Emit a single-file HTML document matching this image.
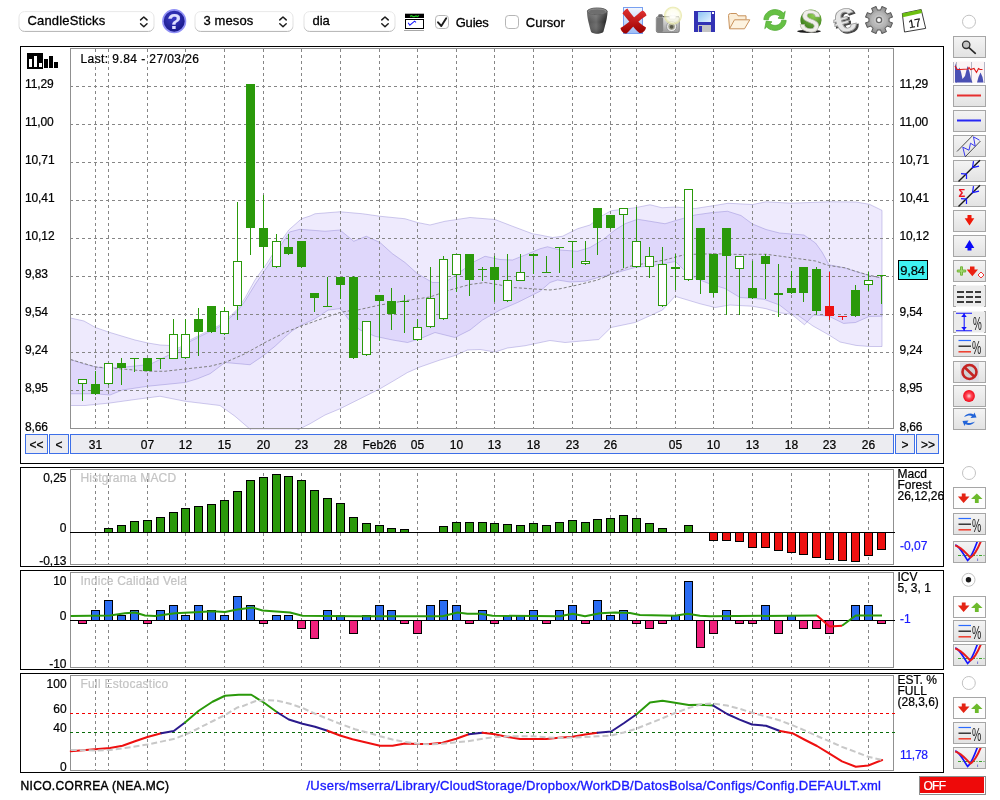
<!DOCTYPE html>
<html><head><meta charset="utf-8"><title>Chart</title>
<style>
html,body{margin:0;padding:0;background:#fff}
body{width:1000px;height:800px;position:relative;overflow:hidden;font-family:"Liberation Sans",sans-serif;font-size:13px;color:#000}
</style></head><body>

<svg width="1000" height="800" viewBox="0 0 1000 800" style="position:absolute;left:0;top:0;will-change:transform" font-family="Liberation Sans, sans-serif" font-size="12" fill="#000">
<defs><clipPath id="cpm"><rect x="70" y="48" width="824" height="382"/></clipPath></defs>
<rect x="20.5" y="46.5" width="923" height="417.0" fill="#fff" stroke="#000" shape-rendering="crispEdges"/>
<rect x="20.5" y="467.5" width="923" height="99.0" fill="#fff" stroke="#000" shape-rendering="crispEdges"/>
<rect x="20.5" y="570.5" width="923" height="99.0" fill="#fff" stroke="#000" shape-rendering="crispEdges"/>
<rect x="20.5" y="673.5" width="923" height="99.0" fill="#fff" stroke="#000" shape-rendering="crispEdges"/>
<g clip-path="url(#cpm)">
<polygon points="70.50,318.00 84.00,321.00 95.50,327.50 110.00,332.50 135.00,340.00 148.00,343.00 160.00,345.00 170.00,345.50 179.00,348.00 191.00,339.50 206.00,332.00 219.00,325.50 231.00,315.50 237.50,309.00 245.00,298.00 255.00,280.00 267.50,262.50 280.00,242.50 288.75,230.00 301.50,218.75 310.00,216.00 315.00,213.75 340.00,211.75 362.50,213.75 380.00,216.25 405.00,218.75 417.50,222.50 430.00,225.00 445.00,221.25 470.00,217.50 495.00,219.50 512.50,226.25 532.50,233.75 540.00,235.00 552.50,237.50 562.50,236.25 577.50,228.75 590.00,225.00 600.00,217.00 611.00,210.75 635.00,207.75 650.00,204.75 662.00,207.75 675.50,207.00 695.00,208.50 714.50,205.50 728.00,203.25 752.50,204.50 766.00,201.80 790.75,203.20 829.00,201.80 856.00,202.00 869.50,204.30 882.00,210.40 882.00,346.50 869.50,346.50 856.00,345.40 840.00,342.00 829.00,335.00 813.00,326.00 797.50,315.00 779.50,312.75 766.00,308.70 752.50,306.25 730.00,305.00 715.00,307.50 700.00,303.75 675.00,296.25 662.50,310.00 635.00,322.50 611.00,327.50 598.75,339.50 565.00,342.50 550.00,340.50 525.00,345.75 507.50,348.00 495.00,352.00 480.00,349.50 467.50,350.00 455.00,355.50 440.00,360.00 420.00,367.00 407.50,372.50 395.00,380.00 380.00,388.75 360.00,398.75 340.00,408.75 325.00,415.00 310.00,423.75 300.00,428.75 292.00,433.00 254.00,433.00 251.00,430.00 235.00,416.25 220.00,405.50 185.00,401.25 160.00,396.25 135.00,399.50 110.00,403.00 85.00,405.50 70.50,405.50" fill="rgba(115,85,240,0.12)" stroke="rgba(120,110,200,0.35)" stroke-width="1"/>
<polygon points="70.50,359.50 84.00,364.00 96.00,367.00 103.00,368.00 120.00,367.50 135.00,366.00 150.00,364.40 169.00,355.00 179.00,350.00 191.00,341.00 206.00,333.50 219.00,327.00 231.00,317.00 237.50,311.00 245.00,301.00 256.00,283.00 268.50,265.00 281.00,245.00 289.50,232.00 300.00,229.25 325.00,231.25 340.00,230.00 353.75,241.25 366.25,236.25 380.00,242.50 392.50,253.75 405.00,262.50 417.50,273.75 432.50,282.50 445.00,282.50 457.50,273.75 475.00,261.25 485.00,256.25 500.00,259.50 512.50,260.00 525.00,255.00 540.00,248.75 547.50,246.75 560.00,250.00 577.50,251.25 590.00,247.50 602.50,240.00 615.00,230.00 625.00,223.75 637.50,219.25 650.00,221.25 665.00,223.75 677.50,220.00 695.00,215.00 712.50,212.50 727.50,211.25 741.00,215.50 752.50,224.00 766.00,229.50 779.50,233.00 804.00,235.00 815.50,243.00 822.00,252.00 829.00,264.80 845.00,267.90 856.00,271.60 869.00,275.40 882.00,278.20 882.00,316.20 869.00,316.50 855.50,322.50 843.50,323.40 828.50,316.00 813.50,315.00 804.50,324.75 795.00,317.00 779.50,305.00 763.75,299.25 748.00,298.00 740.00,297.50 725.00,288.50 710.00,284.00 695.00,278.00 683.00,269.00 675.50,261.50 650.00,266.00 635.00,267.50 611.00,274.25 602.50,276.25 585.00,281.25 570.00,282.00 557.50,280.00 550.00,282.50 540.00,291.25 532.50,295.00 517.50,302.50 500.00,310.00 482.50,320.00 470.00,330.00 455.00,337.50 435.00,332.50 420.00,338.75 407.50,342.50 392.50,340.00 375.00,336.25 360.00,330.00 354.00,325.00 348.60,319.40 343.20,312.20 340.20,308.60 328.20,310.10 315.00,318.80 300.00,325.80 292.00,331.00 285.00,337.00 275.00,346.25 262.50,356.25 250.00,364.75 225.00,362.50 210.00,373.75 197.50,378.75 185.00,382.50 147.50,386.25 122.50,390.00 110.00,395.00 95.50,393.75 70.50,393.75" fill="rgba(115,85,240,0.12)" stroke="rgba(120,110,200,0.35)" stroke-width="1"/>
</g>
<line x1="95.5" y1="49" x2="95.5" y2="428" stroke="#868686" stroke-dasharray="3 3" shape-rendering="crispEdges"/>
<line x1="108.5" y1="49" x2="108.5" y2="428" stroke="#868686" stroke-dasharray="3 3" shape-rendering="crispEdges"/>
<line x1="147.5" y1="49" x2="147.5" y2="428" stroke="#868686" stroke-dasharray="3 3" shape-rendering="crispEdges"/>
<line x1="185.5" y1="49" x2="185.5" y2="428" stroke="#868686" stroke-dasharray="3 3" shape-rendering="crispEdges"/>
<line x1="224.5" y1="49" x2="224.5" y2="428" stroke="#868686" stroke-dasharray="3 3" shape-rendering="crispEdges"/>
<line x1="263.5" y1="49" x2="263.5" y2="428" stroke="#868686" stroke-dasharray="3 3" shape-rendering="crispEdges"/>
<line x1="301.5" y1="49" x2="301.5" y2="428" stroke="#868686" stroke-dasharray="3 3" shape-rendering="crispEdges"/>
<line x1="340.5" y1="49" x2="340.5" y2="428" stroke="#868686" stroke-dasharray="3 3" shape-rendering="crispEdges"/>
<line x1="379.5" y1="49" x2="379.5" y2="428" stroke="#868686" stroke-dasharray="3 3" shape-rendering="crispEdges"/>
<line x1="417.5" y1="49" x2="417.5" y2="428" stroke="#868686" stroke-dasharray="3 3" shape-rendering="crispEdges"/>
<line x1="456.5" y1="49" x2="456.5" y2="428" stroke="#868686" stroke-dasharray="3 3" shape-rendering="crispEdges"/>
<line x1="494.5" y1="49" x2="494.5" y2="428" stroke="#868686" stroke-dasharray="3 3" shape-rendering="crispEdges"/>
<line x1="533.5" y1="49" x2="533.5" y2="428" stroke="#868686" stroke-dasharray="3 3" shape-rendering="crispEdges"/>
<line x1="572.5" y1="49" x2="572.5" y2="428" stroke="#868686" stroke-dasharray="3 3" shape-rendering="crispEdges"/>
<line x1="610.5" y1="49" x2="610.5" y2="428" stroke="#868686" stroke-dasharray="3 3" shape-rendering="crispEdges"/>
<line x1="636.5" y1="49" x2="636.5" y2="428" stroke="#868686" stroke-dasharray="3 3" shape-rendering="crispEdges"/>
<line x1="675.5" y1="49" x2="675.5" y2="428" stroke="#868686" stroke-dasharray="3 3" shape-rendering="crispEdges"/>
<line x1="713.5" y1="49" x2="713.5" y2="428" stroke="#868686" stroke-dasharray="3 3" shape-rendering="crispEdges"/>
<line x1="752.5" y1="49" x2="752.5" y2="428" stroke="#868686" stroke-dasharray="3 3" shape-rendering="crispEdges"/>
<line x1="791.5" y1="49" x2="791.5" y2="428" stroke="#868686" stroke-dasharray="3 3" shape-rendering="crispEdges"/>
<line x1="829.5" y1="49" x2="829.5" y2="428" stroke="#868686" stroke-dasharray="3 3" shape-rendering="crispEdges"/>
<line x1="868.5" y1="49" x2="868.5" y2="428" stroke="#868686" stroke-dasharray="3 3" shape-rendering="crispEdges"/>
<line x1="70" y1="86.5" x2="894" y2="86.5" stroke="#868686" stroke-dasharray="3 3" shape-rendering="crispEdges"/>
<line x1="70" y1="124.5" x2="894" y2="124.5" stroke="#868686" stroke-dasharray="3 3" shape-rendering="crispEdges"/>
<line x1="70" y1="162.5" x2="894" y2="162.5" stroke="#868686" stroke-dasharray="3 3" shape-rendering="crispEdges"/>
<line x1="70" y1="200.5" x2="894" y2="200.5" stroke="#868686" stroke-dasharray="3 3" shape-rendering="crispEdges"/>
<line x1="70" y1="238.5" x2="894" y2="238.5" stroke="#868686" stroke-dasharray="3 3" shape-rendering="crispEdges"/>
<line x1="70" y1="276.5" x2="894" y2="276.5" stroke="#868686" stroke-dasharray="3 3" shape-rendering="crispEdges"/>
<line x1="70" y1="314.5" x2="894" y2="314.5" stroke="#868686" stroke-dasharray="3 3" shape-rendering="crispEdges"/>
<line x1="70" y1="352.5" x2="894" y2="352.5" stroke="#868686" stroke-dasharray="3 3" shape-rendering="crispEdges"/>
<line x1="70" y1="390.5" x2="894" y2="390.5" stroke="#868686" stroke-dasharray="3 3" shape-rendering="crispEdges"/>
<line x1="70" y1="428.5" x2="894" y2="428.5" stroke="#868686" stroke-dasharray="3 3" shape-rendering="crispEdges"/>
<polyline points="70.50,359.50 96.00,367.00 122.50,369.00 147.50,371.25 165.00,371.25 185.00,369.00 210.00,366.25 225.00,362.50 245.00,353.75 265.00,342.50 285.00,332.50 300.00,326.50 310.00,323.00 320.00,319.40 340.00,312.50 348.00,311.00 357.50,310.00 380.00,305.00 405.00,300.75 430.00,297.00 450.00,290.00 470.00,284.50 485.00,282.50 500.00,285.00 512.50,287.50 550.00,290.00 560.00,288.75 577.50,285.00 597.50,280.00 615.00,272.50 630.00,266.25 650.00,262.50 665.00,260.00 685.00,254.50 715.00,253.75 740.00,254.50 766.00,254.25 790.75,257.60 815.50,261.00 828.50,265.50 845.00,267.80 856.00,271.40 869.00,275.20 882.00,278.00" fill="none" stroke="#808080" stroke-width="1" stroke-dasharray="3 2"/>
<rect x="70.5" y="48.5" width="823" height="380" fill="none" stroke="#909090" shape-rendering="crispEdges"/>
<g shape-rendering="crispEdges">
<rect x="82" y="379" width="1" height="22" fill="#2a990a"/>
<rect x="78.5" y="379.5" width="8" height="4" fill="#fff" stroke="#2a990a" stroke-width="1"/>
<rect x="95" y="371" width="1" height="24" fill="#2a990a"/>
<rect x="91" y="384" width="9" height="10" fill="#2a990a"/>
<rect x="108" y="363" width="1" height="22" fill="#2a990a"/>
<rect x="104.5" y="363.5" width="8" height="20" fill="#fff" stroke="#2a990a" stroke-width="1"/>
<rect x="121" y="358" width="1" height="27" fill="#2a990a"/>
<rect x="117" y="363" width="9" height="5" fill="#2a990a"/>
<rect x="134" y="358" width="1" height="14" fill="#2a990a"/>
<rect x="130" y="358" width="9" height="1" fill="#2a990a"/>
<rect x="147" y="358" width="1" height="13" fill="#2a990a"/>
<rect x="143" y="358" width="9" height="13" fill="#2a990a"/>
<rect x="160" y="358" width="1" height="11" fill="#2a990a"/>
<rect x="156" y="358" width="9" height="1" fill="#2a990a"/>
<rect x="173" y="319" width="1" height="40" fill="#2a990a"/>
<rect x="169.5" y="334.5" width="8" height="24" fill="#fff" stroke="#2a990a" stroke-width="1"/>
<rect x="185" y="319" width="1" height="40" fill="#2a990a"/>
<rect x="181.5" y="334.5" width="8" height="23" fill="#fff" stroke="#2a990a" stroke-width="1"/>
<rect x="198" y="308" width="1" height="48" fill="#2a990a"/>
<rect x="194" y="319" width="9" height="13" fill="#2a990a"/>
<rect x="211" y="306" width="1" height="27" fill="#2a990a"/>
<rect x="207" y="306" width="9" height="26" fill="#2a990a"/>
<rect x="224" y="307" width="1" height="28" fill="#2a990a"/>
<rect x="220.5" y="311.5" width="8" height="22" fill="#fff" stroke="#2a990a" stroke-width="1"/>
<rect x="237" y="202" width="1" height="118" fill="#2a990a"/>
<rect x="233.5" y="261.5" width="8" height="44" fill="#fff" stroke="#2a990a" stroke-width="1"/>
<rect x="250" y="84" width="1" height="171" fill="#2a990a"/>
<rect x="246" y="84" width="9" height="144" fill="#2a990a"/>
<rect x="263" y="195" width="1" height="73" fill="#2a990a"/>
<rect x="259" y="228" width="9" height="19" fill="#2a990a"/>
<rect x="276" y="234" width="1" height="34" fill="#2a990a"/>
<rect x="272.5" y="241.5" width="8" height="25" fill="#fff" stroke="#2a990a" stroke-width="1"/>
<rect x="288" y="234" width="1" height="21" fill="#2a990a"/>
<rect x="284" y="247" width="9" height="7" fill="#2a990a"/>
<rect x="301" y="241" width="1" height="27" fill="#2a990a"/>
<rect x="297" y="241" width="9" height="26" fill="#2a990a"/>
<rect x="314" y="293" width="1" height="19" fill="#2a990a"/>
<rect x="310" y="293" width="9" height="5" fill="#2a990a"/>
<rect x="327" y="277" width="1" height="30" fill="#2a990a"/>
<rect x="323" y="306" width="9" height="1" fill="#2a990a"/>
<rect x="340" y="277" width="1" height="22" fill="#2a990a"/>
<rect x="336" y="277" width="9" height="8" fill="#2a990a"/>
<rect x="353" y="276" width="1" height="83" fill="#2a990a"/>
<rect x="349" y="277" width="9" height="81" fill="#2a990a"/>
<rect x="366" y="321" width="1" height="35" fill="#2a990a"/>
<rect x="362.5" y="321.5" width="8" height="33" fill="#fff" stroke="#2a990a" stroke-width="1"/>
<rect x="379" y="295" width="1" height="46" fill="#2a990a"/>
<rect x="375" y="295" width="9" height="6" fill="#2a990a"/>
<rect x="391" y="288" width="1" height="42" fill="#2a990a"/>
<rect x="387" y="301" width="9" height="13" fill="#2a990a"/>
<rect x="404" y="295" width="1" height="38" fill="#2a990a"/>
<rect x="400" y="301" width="9" height="1" fill="#2a990a"/>
<rect x="417" y="319" width="1" height="22" fill="#2a990a"/>
<rect x="413.5" y="327.5" width="8" height="12" fill="#fff" stroke="#2a990a" stroke-width="1"/>
<rect x="430" y="267" width="1" height="61" fill="#2a990a"/>
<rect x="426.5" y="298.5" width="8" height="28" fill="#fff" stroke="#2a990a" stroke-width="1"/>
<rect x="443" y="256" width="1" height="64" fill="#2a990a"/>
<rect x="439.5" y="259.5" width="8" height="59" fill="#fff" stroke="#2a990a" stroke-width="1"/>
<rect x="456" y="254" width="1" height="38" fill="#2a990a"/>
<rect x="452.5" y="254.5" width="8" height="20" fill="#fff" stroke="#2a990a" stroke-width="1"/>
<rect x="469" y="254" width="1" height="42" fill="#2a990a"/>
<rect x="465" y="254" width="9" height="26" fill="#2a990a"/>
<rect x="482" y="267" width="1" height="14" fill="#2a990a"/>
<rect x="478" y="269" width="9" height="1" fill="#2a990a"/>
<rect x="494" y="256" width="1" height="46" fill="#2a990a"/>
<rect x="490" y="267" width="9" height="13" fill="#2a990a"/>
<rect x="507" y="254" width="1" height="48" fill="#2a990a"/>
<rect x="503.5" y="280.5" width="8" height="20" fill="#fff" stroke="#2a990a" stroke-width="1"/>
<rect x="520" y="254" width="1" height="27" fill="#2a990a"/>
<rect x="516.5" y="272.5" width="8" height="8" fill="#fff" stroke="#2a990a" stroke-width="1"/>
<rect x="533" y="254" width="1" height="20" fill="#2a990a"/>
<rect x="529" y="254" width="9" height="2" fill="#2a990a"/>
<rect x="546" y="256" width="1" height="17" fill="#2a990a"/>
<rect x="542" y="272" width="9" height="1" fill="#2a990a"/>
<rect x="559" y="247" width="1" height="26" fill="#2a990a"/>
<rect x="555" y="247" width="9" height="1" fill="#2a990a"/>
<rect x="572" y="241" width="1" height="27" fill="#2a990a"/>
<rect x="568" y="241" width="9" height="1" fill="#2a990a"/>
<rect x="585" y="241" width="1" height="24" fill="#2a990a"/>
<rect x="581.5" y="261.5" width="8" height="2" fill="#fff" stroke="#2a990a" stroke-width="1"/>
<rect x="597" y="208" width="1" height="47" fill="#2a990a"/>
<rect x="593" y="208" width="9" height="20" fill="#2a990a"/>
<rect x="610" y="215" width="1" height="14" fill="#2a990a"/>
<rect x="606" y="215" width="9" height="13" fill="#2a990a"/>
<rect x="623" y="208" width="1" height="60" fill="#2a990a"/>
<rect x="619.5" y="208.5" width="8" height="6" fill="#fff" stroke="#2a990a" stroke-width="1"/>
<rect x="636" y="207" width="1" height="61" fill="#2a990a"/>
<rect x="632.5" y="241.5" width="8" height="25" fill="#fff" stroke="#2a990a" stroke-width="1"/>
<rect x="649" y="247" width="1" height="31" fill="#2a990a"/>
<rect x="645.5" y="256.5" width="8" height="10" fill="#fff" stroke="#2a990a" stroke-width="1"/>
<rect x="662" y="247" width="1" height="60" fill="#2a990a"/>
<rect x="658.5" y="264.5" width="8" height="41" fill="#fff" stroke="#2a990a" stroke-width="1"/>
<rect x="675" y="254" width="1" height="36" fill="#2a990a"/>
<rect x="671" y="267" width="9" height="2" fill="#2a990a"/>
<rect x="688" y="189" width="1" height="92" fill="#2a990a"/>
<rect x="684.5" y="189.5" width="8" height="90" fill="#fff" stroke="#2a990a" stroke-width="1"/>
<rect x="700" y="228" width="1" height="66" fill="#2a990a"/>
<rect x="696" y="228" width="9" height="52" fill="#2a990a"/>
<rect x="713" y="254" width="1" height="43" fill="#2a990a"/>
<rect x="709" y="254" width="9" height="39" fill="#2a990a"/>
<rect x="726" y="228" width="1" height="87" fill="#2a990a"/>
<rect x="722" y="228" width="9" height="28" fill="#2a990a"/>
<rect x="739" y="256" width="1" height="59" fill="#2a990a"/>
<rect x="735.5" y="256.5" width="8" height="12" fill="#fff" stroke="#2a990a" stroke-width="1"/>
<rect x="752" y="261" width="1" height="38" fill="#2a990a"/>
<rect x="748" y="288" width="9" height="10" fill="#2a990a"/>
<rect x="765" y="254" width="1" height="45" fill="#2a990a"/>
<rect x="761" y="256" width="9" height="8" fill="#2a990a"/>
<rect x="778" y="264" width="1" height="53" fill="#2a990a"/>
<rect x="774" y="293" width="9" height="2" fill="#2a990a"/>
<rect x="791" y="271" width="1" height="23" fill="#2a990a"/>
<rect x="787" y="288" width="9" height="5" fill="#2a990a"/>
<rect x="803" y="267" width="1" height="35" fill="#2a990a"/>
<rect x="799" y="267" width="9" height="26" fill="#2a990a"/>
<rect x="816" y="267" width="1" height="48" fill="#2a990a"/>
<rect x="812" y="269" width="9" height="42" fill="#2a990a"/>
<rect x="829" y="272" width="1" height="48" fill="#ee1010"/>
<rect x="825" y="306" width="9" height="10" fill="#ee1010"/>
<rect x="842" y="316" width="1" height="4" fill="#ee1010"/>
<rect x="838" y="316" width="9" height="1" fill="#ee1010"/>
<rect x="855" y="285" width="1" height="32" fill="#2a990a"/>
<rect x="851" y="290" width="9" height="26" fill="#2a990a"/>
<rect x="868" y="272" width="1" height="19" fill="#2a990a"/>
<rect x="864.5" y="280.5" width="8" height="4" fill="#fff" stroke="#2a990a" stroke-width="1"/>
<rect x="881" y="275" width="1" height="29" fill="#2a990a"/>
<rect x="877" y="275" width="9" height="1" fill="#2a990a"/>
</g>
<text x="25" y="88" letter-spacing="-0.12" stroke="#000" stroke-width="0.22">11,29</text>
<text x="899.5" y="88" letter-spacing="-0.12" stroke="#000" stroke-width="0.22">11,29</text>
<text x="25" y="126" letter-spacing="-0.12" stroke="#000" stroke-width="0.22">11,00</text>
<text x="899.5" y="126" letter-spacing="-0.12" stroke="#000" stroke-width="0.22">11,00</text>
<text x="25" y="164" letter-spacing="-0.12" stroke="#000" stroke-width="0.22">10,71</text>
<text x="899.5" y="164" letter-spacing="-0.12" stroke="#000" stroke-width="0.22">10,71</text>
<text x="25" y="202" letter-spacing="-0.12" stroke="#000" stroke-width="0.22">10,41</text>
<text x="899.5" y="202" letter-spacing="-0.12" stroke="#000" stroke-width="0.22">10,41</text>
<text x="25" y="240" letter-spacing="-0.12" stroke="#000" stroke-width="0.22">10,12</text>
<text x="899.5" y="240" letter-spacing="-0.12" stroke="#000" stroke-width="0.22">10,12</text>
<text x="25" y="278" letter-spacing="-0.12" stroke="#000" stroke-width="0.22">9,83</text>
<text x="25" y="316" letter-spacing="-0.12" stroke="#000" stroke-width="0.22">9,54</text>
<text x="899.5" y="316" letter-spacing="-0.12" stroke="#000" stroke-width="0.22">9,54</text>
<text x="25" y="354" letter-spacing="-0.12" stroke="#000" stroke-width="0.22">9,24</text>
<text x="899.5" y="354" letter-spacing="-0.12" stroke="#000" stroke-width="0.22">9,24</text>
<text x="25" y="392" letter-spacing="-0.12" stroke="#000" stroke-width="0.22">8,95</text>
<text x="899.5" y="392" letter-spacing="-0.12" stroke="#000" stroke-width="0.22">8,95</text>
<text x="25" y="431" letter-spacing="-0.12" stroke="#000" stroke-width="0.22">8,66</text>
<text x="899.5" y="431" letter-spacing="-0.12" stroke="#000" stroke-width="0.22">8,66</text>
<rect x="898.5" y="260.5" width="29" height="19" fill="#3ff2f2" stroke="#000" shape-rendering="crispEdges"/>
<text x="900.3" y="275.2" font-size="13" letter-spacing="-0.2" stroke="#000" stroke-width="0.22">9,84</text>
<text x="80.5" y="63" letter-spacing="0.42" stroke="#000" stroke-width="0.22">Last: 9.84 - 27/03/26</text>
<g shape-rendering="crispEdges"><rect x="27" y="53" width="16" height="16" fill="#000"/><rect x="29" y="59" width="3" height="8" fill="#fff"/><rect x="34" y="56" width="3" height="11" fill="#fff"/><rect x="39" y="63" width="3" height="4" fill="#fff"/><rect x="44" y="59" width="4" height="9" fill="#000"/><rect x="49" y="56" width="4" height="12" fill="#000"/><rect x="54" y="62" width="4" height="6" fill="#000"/></g>
<g shape-rendering="crispEdges" fill="#ececf1" stroke="#3d6fe8">
<rect x="25.5" y="434.5" width="22" height="19"/><rect x="49.5" y="434.5" width="19" height="19"/><rect x="70.5" y="434.5" width="823" height="19"/><rect x="895.5" y="434.5" width="19" height="19"/><rect x="916.5" y="434.5" width="22" height="19"/></g>
<text x="36.5" y="448.5" text-anchor="middle" stroke="#000" stroke-width="0.22">&lt;&lt;</text><text x="59" y="448.5" text-anchor="middle" stroke="#000" stroke-width="0.22">&lt;</text><text x="905" y="448.5" text-anchor="middle" stroke="#000" stroke-width="0.22">&gt;</text><text x="928" y="448.5" text-anchor="middle" stroke="#000" stroke-width="0.22">&gt;&gt;</text>
<text x="95.5" y="448.5" text-anchor="middle" stroke="#000" stroke-width="0.22">31</text>
<text x="147.5" y="448.5" text-anchor="middle" stroke="#000" stroke-width="0.22">07</text>
<text x="185.5" y="448.5" text-anchor="middle" stroke="#000" stroke-width="0.22">12</text>
<text x="224.5" y="448.5" text-anchor="middle" stroke="#000" stroke-width="0.22">15</text>
<text x="263.5" y="448.5" text-anchor="middle" stroke="#000" stroke-width="0.22">20</text>
<text x="301.5" y="448.5" text-anchor="middle" stroke="#000" stroke-width="0.22">23</text>
<text x="340.5" y="448.5" text-anchor="middle" stroke="#000" stroke-width="0.22">28</text>
<text x="379.5" y="448.5" text-anchor="middle" stroke="#000" stroke-width="0.22">Feb26</text>
<text x="417.5" y="448.5" text-anchor="middle" stroke="#000" stroke-width="0.22">05</text>
<text x="456.5" y="448.5" text-anchor="middle" stroke="#000" stroke-width="0.22">10</text>
<text x="494.5" y="448.5" text-anchor="middle" stroke="#000" stroke-width="0.22">13</text>
<text x="533.5" y="448.5" text-anchor="middle" stroke="#000" stroke-width="0.22">18</text>
<text x="572.5" y="448.5" text-anchor="middle" stroke="#000" stroke-width="0.22">23</text>
<text x="610.5" y="448.5" text-anchor="middle" stroke="#000" stroke-width="0.22">26</text>
<text x="675.5" y="448.5" text-anchor="middle" stroke="#000" stroke-width="0.22">05</text>
<text x="713.5" y="448.5" text-anchor="middle" stroke="#000" stroke-width="0.22">10</text>
<text x="752.5" y="448.5" text-anchor="middle" stroke="#000" stroke-width="0.22">13</text>
<text x="791.5" y="448.5" text-anchor="middle" stroke="#000" stroke-width="0.22">18</text>
<text x="829.5" y="448.5" text-anchor="middle" stroke="#000" stroke-width="0.22">23</text>
<text x="868.5" y="448.5" text-anchor="middle" stroke="#000" stroke-width="0.22">26</text>
<line x1="95.5" y1="473" x2="95.5" y2="564" stroke="#868686" stroke-dasharray="3 3" shape-rendering="crispEdges"/>
<line x1="108.5" y1="473" x2="108.5" y2="564" stroke="#868686" stroke-dasharray="3 3" shape-rendering="crispEdges"/>
<line x1="147.5" y1="473" x2="147.5" y2="564" stroke="#868686" stroke-dasharray="3 3" shape-rendering="crispEdges"/>
<line x1="185.5" y1="473" x2="185.5" y2="564" stroke="#868686" stroke-dasharray="3 3" shape-rendering="crispEdges"/>
<line x1="224.5" y1="473" x2="224.5" y2="564" stroke="#868686" stroke-dasharray="3 3" shape-rendering="crispEdges"/>
<line x1="263.5" y1="473" x2="263.5" y2="564" stroke="#868686" stroke-dasharray="3 3" shape-rendering="crispEdges"/>
<line x1="301.5" y1="473" x2="301.5" y2="564" stroke="#868686" stroke-dasharray="3 3" shape-rendering="crispEdges"/>
<line x1="340.5" y1="473" x2="340.5" y2="564" stroke="#868686" stroke-dasharray="3 3" shape-rendering="crispEdges"/>
<line x1="379.5" y1="473" x2="379.5" y2="564" stroke="#868686" stroke-dasharray="3 3" shape-rendering="crispEdges"/>
<line x1="417.5" y1="473" x2="417.5" y2="564" stroke="#868686" stroke-dasharray="3 3" shape-rendering="crispEdges"/>
<line x1="456.5" y1="473" x2="456.5" y2="564" stroke="#868686" stroke-dasharray="3 3" shape-rendering="crispEdges"/>
<line x1="494.5" y1="473" x2="494.5" y2="564" stroke="#868686" stroke-dasharray="3 3" shape-rendering="crispEdges"/>
<line x1="533.5" y1="473" x2="533.5" y2="564" stroke="#868686" stroke-dasharray="3 3" shape-rendering="crispEdges"/>
<line x1="572.5" y1="473" x2="572.5" y2="564" stroke="#868686" stroke-dasharray="3 3" shape-rendering="crispEdges"/>
<line x1="610.5" y1="473" x2="610.5" y2="564" stroke="#868686" stroke-dasharray="3 3" shape-rendering="crispEdges"/>
<line x1="636.5" y1="473" x2="636.5" y2="564" stroke="#868686" stroke-dasharray="3 3" shape-rendering="crispEdges"/>
<line x1="675.5" y1="473" x2="675.5" y2="564" stroke="#868686" stroke-dasharray="3 3" shape-rendering="crispEdges"/>
<line x1="713.5" y1="473" x2="713.5" y2="564" stroke="#868686" stroke-dasharray="3 3" shape-rendering="crispEdges"/>
<line x1="752.5" y1="473" x2="752.5" y2="564" stroke="#868686" stroke-dasharray="3 3" shape-rendering="crispEdges"/>
<line x1="791.5" y1="473" x2="791.5" y2="564" stroke="#868686" stroke-dasharray="3 3" shape-rendering="crispEdges"/>
<line x1="829.5" y1="473" x2="829.5" y2="564" stroke="#868686" stroke-dasharray="3 3" shape-rendering="crispEdges"/>
<line x1="868.5" y1="473" x2="868.5" y2="564" stroke="#868686" stroke-dasharray="3 3" shape-rendering="crispEdges"/>
<rect x="70.5" y="469.5" width="823" height="95" fill="none" stroke="#909090" shape-rendering="crispEdges"/>
<text x="80.5" y="482" fill="#c4c4c4" letter-spacing="0.17" stroke="#c4c4c4" stroke-width="0.22">Histgrama MACD</text>
<g shape-rendering="crispEdges" stroke="#000">
<rect x="104.5" y="528.5" width="8" height="4" fill="#2a990a"/>
<rect x="117.5" y="525.5" width="8" height="7" fill="#2a990a"/>
<rect x="130.5" y="521.5" width="8" height="11" fill="#2a990a"/>
<rect x="143.5" y="520.5" width="8" height="12" fill="#2a990a"/>
<rect x="156.5" y="517.5" width="8" height="15" fill="#2a990a"/>
<rect x="169.5" y="512.5" width="8" height="20" fill="#2a990a"/>
<rect x="181.5" y="508.5" width="8" height="24" fill="#2a990a"/>
<rect x="194.5" y="506.5" width="8" height="26" fill="#2a990a"/>
<rect x="207.5" y="504.5" width="8" height="28" fill="#2a990a"/>
<rect x="220.5" y="500.5" width="8" height="32" fill="#2a990a"/>
<rect x="233.5" y="491.5" width="8" height="41" fill="#2a990a"/>
<rect x="246.5" y="480.5" width="8" height="52" fill="#2a990a"/>
<rect x="259.5" y="477.5" width="8" height="55" fill="#2a990a"/>
<rect x="272.5" y="474.5" width="8" height="58" fill="#2a990a"/>
<rect x="284.5" y="476.5" width="8" height="56" fill="#2a990a"/>
<rect x="297.5" y="480.5" width="8" height="52" fill="#2a990a"/>
<rect x="310.5" y="490.5" width="8" height="42" fill="#2a990a"/>
<rect x="323.5" y="498.5" width="8" height="34" fill="#2a990a"/>
<rect x="336.5" y="503.5" width="8" height="29" fill="#2a990a"/>
<rect x="349.5" y="517.5" width="8" height="15" fill="#2a990a"/>
<rect x="362.5" y="523.5" width="8" height="9" fill="#2a990a"/>
<rect x="375.5" y="525.5" width="8" height="7" fill="#2a990a"/>
<rect x="387.5" y="528.5" width="8" height="4" fill="#2a990a"/>
<rect x="400.5" y="529.5" width="8" height="3" fill="#2a990a"/>
<rect x="439.5" y="526.5" width="8" height="6" fill="#2a990a"/>
<rect x="452.5" y="522.5" width="8" height="10" fill="#2a990a"/>
<rect x="465.5" y="522.5" width="8" height="10" fill="#2a990a"/>
<rect x="478.5" y="522.5" width="8" height="10" fill="#2a990a"/>
<rect x="490.5" y="523.5" width="8" height="9" fill="#2a990a"/>
<rect x="503.5" y="524.5" width="8" height="8" fill="#2a990a"/>
<rect x="516.5" y="525.5" width="8" height="7" fill="#2a990a"/>
<rect x="529.5" y="523.5" width="8" height="9" fill="#2a990a"/>
<rect x="542.5" y="525.5" width="8" height="7" fill="#2a990a"/>
<rect x="555.5" y="522.5" width="8" height="10" fill="#2a990a"/>
<rect x="568.5" y="520.5" width="8" height="12" fill="#2a990a"/>
<rect x="581.5" y="522.5" width="8" height="10" fill="#2a990a"/>
<rect x="593.5" y="519.5" width="8" height="13" fill="#2a990a"/>
<rect x="606.5" y="518.5" width="8" height="14" fill="#2a990a"/>
<rect x="619.5" y="515.5" width="8" height="17" fill="#2a990a"/>
<rect x="632.5" y="518.5" width="8" height="14" fill="#2a990a"/>
<rect x="645.5" y="523.5" width="8" height="9" fill="#2a990a"/>
<rect x="658.5" y="528.5" width="8" height="4" fill="#2a990a"/>
<rect x="684.5" y="525.5" width="8" height="7" fill="#2a990a"/>
<rect x="709.5" y="532.5" width="8" height="8" fill="#ee1010"/>
<rect x="722.5" y="532.5" width="8" height="8" fill="#ee1010"/>
<rect x="735.5" y="532.5" width="8" height="9" fill="#ee1010"/>
<rect x="748.5" y="532.5" width="8" height="15" fill="#ee1010"/>
<rect x="761.5" y="532.5" width="8" height="15" fill="#ee1010"/>
<rect x="774.5" y="532.5" width="8" height="18" fill="#ee1010"/>
<rect x="787.5" y="532.5" width="8" height="20" fill="#ee1010"/>
<rect x="799.5" y="532.5" width="8" height="22" fill="#ee1010"/>
<rect x="812.5" y="532.5" width="8" height="25" fill="#ee1010"/>
<rect x="825.5" y="532.5" width="8" height="27" fill="#ee1010"/>
<rect x="838.5" y="532.5" width="8" height="28" fill="#ee1010"/>
<rect x="851.5" y="532.5" width="8" height="29" fill="#ee1010"/>
<rect x="864.5" y="532.5" width="8" height="23" fill="#ee1010"/>
<rect x="877.5" y="532.5" width="8" height="17" fill="#ee1010"/>
<line x1="70" y1="532.5" x2="895" y2="532.5"/></g>
<text x="66.5" y="482" text-anchor="end" stroke="#000" stroke-width="0.22">0,25</text><text x="66.5" y="532" text-anchor="end" stroke="#000" stroke-width="0.22">0</text><text x="66.5" y="565" text-anchor="end" stroke="#000" stroke-width="0.22">-0,13</text>
<text x="897.5" y="478" stroke="#000" stroke-width="0.22">Macd</text><text x="897.5" y="489" stroke="#000" stroke-width="0.22">Forest</text><text x="897.5" y="500" stroke="#000" stroke-width="0.22">26,12,26</text><text x="900" y="549.7" fill="#1a1aff" stroke="#1a1aff" stroke-width="0.22">-0,07</text>
<rect x="944" y="490" width="8" height="12" fill="#fff"/>
<line x1="95.5" y1="576" x2="95.5" y2="667" stroke="#868686" stroke-dasharray="3 3" shape-rendering="crispEdges"/>
<line x1="108.5" y1="576" x2="108.5" y2="667" stroke="#868686" stroke-dasharray="3 3" shape-rendering="crispEdges"/>
<line x1="147.5" y1="576" x2="147.5" y2="667" stroke="#868686" stroke-dasharray="3 3" shape-rendering="crispEdges"/>
<line x1="185.5" y1="576" x2="185.5" y2="667" stroke="#868686" stroke-dasharray="3 3" shape-rendering="crispEdges"/>
<line x1="224.5" y1="576" x2="224.5" y2="667" stroke="#868686" stroke-dasharray="3 3" shape-rendering="crispEdges"/>
<line x1="263.5" y1="576" x2="263.5" y2="667" stroke="#868686" stroke-dasharray="3 3" shape-rendering="crispEdges"/>
<line x1="301.5" y1="576" x2="301.5" y2="667" stroke="#868686" stroke-dasharray="3 3" shape-rendering="crispEdges"/>
<line x1="340.5" y1="576" x2="340.5" y2="667" stroke="#868686" stroke-dasharray="3 3" shape-rendering="crispEdges"/>
<line x1="379.5" y1="576" x2="379.5" y2="667" stroke="#868686" stroke-dasharray="3 3" shape-rendering="crispEdges"/>
<line x1="417.5" y1="576" x2="417.5" y2="667" stroke="#868686" stroke-dasharray="3 3" shape-rendering="crispEdges"/>
<line x1="456.5" y1="576" x2="456.5" y2="667" stroke="#868686" stroke-dasharray="3 3" shape-rendering="crispEdges"/>
<line x1="494.5" y1="576" x2="494.5" y2="667" stroke="#868686" stroke-dasharray="3 3" shape-rendering="crispEdges"/>
<line x1="533.5" y1="576" x2="533.5" y2="667" stroke="#868686" stroke-dasharray="3 3" shape-rendering="crispEdges"/>
<line x1="572.5" y1="576" x2="572.5" y2="667" stroke="#868686" stroke-dasharray="3 3" shape-rendering="crispEdges"/>
<line x1="610.5" y1="576" x2="610.5" y2="667" stroke="#868686" stroke-dasharray="3 3" shape-rendering="crispEdges"/>
<line x1="636.5" y1="576" x2="636.5" y2="667" stroke="#868686" stroke-dasharray="3 3" shape-rendering="crispEdges"/>
<line x1="675.5" y1="576" x2="675.5" y2="667" stroke="#868686" stroke-dasharray="3 3" shape-rendering="crispEdges"/>
<line x1="713.5" y1="576" x2="713.5" y2="667" stroke="#868686" stroke-dasharray="3 3" shape-rendering="crispEdges"/>
<line x1="752.5" y1="576" x2="752.5" y2="667" stroke="#868686" stroke-dasharray="3 3" shape-rendering="crispEdges"/>
<line x1="791.5" y1="576" x2="791.5" y2="667" stroke="#868686" stroke-dasharray="3 3" shape-rendering="crispEdges"/>
<line x1="829.5" y1="576" x2="829.5" y2="667" stroke="#868686" stroke-dasharray="3 3" shape-rendering="crispEdges"/>
<line x1="868.5" y1="576" x2="868.5" y2="667" stroke="#868686" stroke-dasharray="3 3" shape-rendering="crispEdges"/>
<rect x="70.5" y="572.5" width="823" height="95" fill="none" stroke="#909090" shape-rendering="crispEdges"/>
<text x="80.5" y="585" fill="#c4c4c4" letter-spacing="0.2" stroke="#c4c4c4" stroke-width="0.22">Indice Calidad Vela</text>
<g shape-rendering="crispEdges" stroke="#000">
<rect x="78.5" y="620.5" width="8" height="3" fill="#f0207c"/>
<rect x="91.5" y="610.5" width="8" height="10" fill="#2a6cf2"/>
<rect x="104.5" y="600.5" width="8" height="20" fill="#2a6cf2"/>
<rect x="117.5" y="615.5" width="8" height="5" fill="#2a6cf2"/>
<rect x="130.5" y="610.5" width="8" height="10" fill="#2a6cf2"/>
<rect x="143.5" y="620.5" width="8" height="3" fill="#f0207c"/>
<rect x="156.5" y="610.5" width="8" height="10" fill="#2a6cf2"/>
<rect x="169.5" y="605.5" width="8" height="15" fill="#2a6cf2"/>
<rect x="181.5" y="615.5" width="8" height="5" fill="#2a6cf2"/>
<rect x="194.5" y="605.5" width="8" height="15" fill="#2a6cf2"/>
<rect x="207.5" y="610.5" width="8" height="10" fill="#2a6cf2"/>
<rect x="220.5" y="615.5" width="8" height="5" fill="#2a6cf2"/>
<rect x="233.5" y="596.5" width="8" height="24" fill="#2a6cf2"/>
<rect x="246.5" y="605.5" width="8" height="15" fill="#2a6cf2"/>
<rect x="259.5" y="620.5" width="8" height="3" fill="#f0207c"/>
<rect x="272.5" y="615.5" width="8" height="5" fill="#2a6cf2"/>
<rect x="284.5" y="615.5" width="8" height="5" fill="#2a6cf2"/>
<rect x="297.5" y="620.5" width="8" height="8" fill="#f0207c"/>
<rect x="310.5" y="620.5" width="8" height="18" fill="#f0207c"/>
<rect x="323.5" y="610.5" width="8" height="10" fill="#2a6cf2"/>
<rect x="336.5" y="615.5" width="8" height="5" fill="#2a6cf2"/>
<rect x="349.5" y="620.5" width="8" height="13" fill="#f0207c"/>
<rect x="362.5" y="615.5" width="8" height="5" fill="#2a6cf2"/>
<rect x="375.5" y="605.5" width="8" height="15" fill="#2a6cf2"/>
<rect x="387.5" y="610.5" width="8" height="10" fill="#2a6cf2"/>
<rect x="400.5" y="620.5" width="8" height="3" fill="#f0207c"/>
<rect x="413.5" y="620.5" width="8" height="13" fill="#f0207c"/>
<rect x="426.5" y="605.5" width="8" height="15" fill="#2a6cf2"/>
<rect x="439.5" y="600.5" width="8" height="20" fill="#2a6cf2"/>
<rect x="452.5" y="605.5" width="8" height="15" fill="#2a6cf2"/>
<rect x="465.5" y="620.5" width="8" height="3" fill="#f0207c"/>
<rect x="478.5" y="610.5" width="8" height="10" fill="#2a6cf2"/>
<rect x="490.5" y="620.5" width="8" height="3" fill="#f0207c"/>
<rect x="503.5" y="615.5" width="8" height="5" fill="#2a6cf2"/>
<rect x="516.5" y="615.5" width="8" height="5" fill="#2a6cf2"/>
<rect x="529.5" y="610.5" width="8" height="10" fill="#2a6cf2"/>
<rect x="542.5" y="620.5" width="8" height="3" fill="#f0207c"/>
<rect x="555.5" y="610.5" width="8" height="10" fill="#2a6cf2"/>
<rect x="568.5" y="605.5" width="8" height="15" fill="#2a6cf2"/>
<rect x="581.5" y="620.5" width="8" height="3" fill="#f0207c"/>
<rect x="593.5" y="600.5" width="8" height="20" fill="#2a6cf2"/>
<rect x="606.5" y="615.5" width="8" height="5" fill="#2a6cf2"/>
<rect x="619.5" y="610.5" width="8" height="10" fill="#2a6cf2"/>
<rect x="632.5" y="620.5" width="8" height="3" fill="#f0207c"/>
<rect x="645.5" y="620.5" width="8" height="8" fill="#f0207c"/>
<rect x="658.5" y="620.5" width="8" height="3" fill="#f0207c"/>
<rect x="671.5" y="615.5" width="8" height="5" fill="#2a6cf2"/>
<rect x="684.5" y="581.5" width="8" height="39" fill="#2a6cf2"/>
<rect x="696.5" y="620.5" width="8" height="27" fill="#f0207c"/>
<rect x="709.5" y="620.5" width="8" height="13" fill="#f0207c"/>
<rect x="722.5" y="610.5" width="8" height="10" fill="#2a6cf2"/>
<rect x="735.5" y="620.5" width="8" height="3" fill="#f0207c"/>
<rect x="748.5" y="620.5" width="8" height="3" fill="#f0207c"/>
<rect x="761.5" y="605.5" width="8" height="15" fill="#2a6cf2"/>
<rect x="774.5" y="620.5" width="8" height="13" fill="#f0207c"/>
<rect x="787.5" y="615.5" width="8" height="5" fill="#2a6cf2"/>
<rect x="799.5" y="620.5" width="8" height="8" fill="#f0207c"/>
<rect x="812.5" y="620.5" width="8" height="8" fill="#f0207c"/>
<rect x="825.5" y="620.5" width="8" height="13" fill="#f0207c"/>
<rect x="851.5" y="605.5" width="8" height="15" fill="#2a6cf2"/>
<rect x="864.5" y="605.5" width="8" height="15" fill="#2a6cf2"/>
<rect x="877.5" y="620.5" width="8" height="3" fill="#f0207c"/>
<line x1="70" y1="620.5" x2="895" y2="620.5"/></g>
<polyline points="70.75,616.00 110.00,615.50 125.00,613.25 135.00,612.50 145.00,615.50 155.00,616.00 175.00,613.25 200.00,612.00 212.50,611.25 225.00,612.00 237.50,609.50 252.50,607.50 262.50,610.50 290.00,612.50 302.50,615.75 355.00,616.25 442.50,616.25 457.50,612.50 467.50,613.75 480.00,613.75 492.50,615.75 560.00,616.25 572.50,613.75 585.00,616.25 600.00,613.25 615.00,612.50 630.00,613.00 640.00,615.00 675.00,615.75 687.50,613.75 700.00,615.75 710.00,616.25 817.00,615.50" fill="none" stroke="#2a990a" stroke-width="2" stroke-linejoin="round"/>
<polyline points="842.00,625.75 855.80,615.50 882.00,615.50" fill="none" stroke="#2a990a" stroke-width="2" stroke-linejoin="round"/>
<polyline points="817.00,615.50 829.50,626.40 842.00,625.75" fill="none" stroke="#ee1010" stroke-width="2" stroke-linejoin="round"/>
<text x="66.5" y="585" text-anchor="end" stroke="#000" stroke-width="0.22">10</text><text x="66.5" y="620" text-anchor="end" stroke="#000" stroke-width="0.22">0</text><text x="66.5" y="667.5" text-anchor="end" stroke="#000" stroke-width="0.22">-10</text>
<text x="897.5" y="581" stroke="#000" stroke-width="0.22">ICV</text><text x="897.5" y="592" stroke="#000" stroke-width="0.22">5, 3, 1</text><text x="900" y="623.3" fill="#1a1aff" stroke="#1a1aff" stroke-width="0.22">-1</text>
<line x1="95.5" y1="679" x2="95.5" y2="770" stroke="#868686" stroke-dasharray="3 3" shape-rendering="crispEdges"/>
<line x1="108.5" y1="679" x2="108.5" y2="770" stroke="#868686" stroke-dasharray="3 3" shape-rendering="crispEdges"/>
<line x1="147.5" y1="679" x2="147.5" y2="770" stroke="#868686" stroke-dasharray="3 3" shape-rendering="crispEdges"/>
<line x1="185.5" y1="679" x2="185.5" y2="770" stroke="#868686" stroke-dasharray="3 3" shape-rendering="crispEdges"/>
<line x1="224.5" y1="679" x2="224.5" y2="770" stroke="#868686" stroke-dasharray="3 3" shape-rendering="crispEdges"/>
<line x1="263.5" y1="679" x2="263.5" y2="770" stroke="#868686" stroke-dasharray="3 3" shape-rendering="crispEdges"/>
<line x1="301.5" y1="679" x2="301.5" y2="770" stroke="#868686" stroke-dasharray="3 3" shape-rendering="crispEdges"/>
<line x1="340.5" y1="679" x2="340.5" y2="770" stroke="#868686" stroke-dasharray="3 3" shape-rendering="crispEdges"/>
<line x1="379.5" y1="679" x2="379.5" y2="770" stroke="#868686" stroke-dasharray="3 3" shape-rendering="crispEdges"/>
<line x1="417.5" y1="679" x2="417.5" y2="770" stroke="#868686" stroke-dasharray="3 3" shape-rendering="crispEdges"/>
<line x1="456.5" y1="679" x2="456.5" y2="770" stroke="#868686" stroke-dasharray="3 3" shape-rendering="crispEdges"/>
<line x1="494.5" y1="679" x2="494.5" y2="770" stroke="#868686" stroke-dasharray="3 3" shape-rendering="crispEdges"/>
<line x1="533.5" y1="679" x2="533.5" y2="770" stroke="#868686" stroke-dasharray="3 3" shape-rendering="crispEdges"/>
<line x1="572.5" y1="679" x2="572.5" y2="770" stroke="#868686" stroke-dasharray="3 3" shape-rendering="crispEdges"/>
<line x1="610.5" y1="679" x2="610.5" y2="770" stroke="#868686" stroke-dasharray="3 3" shape-rendering="crispEdges"/>
<line x1="636.5" y1="679" x2="636.5" y2="770" stroke="#868686" stroke-dasharray="3 3" shape-rendering="crispEdges"/>
<line x1="675.5" y1="679" x2="675.5" y2="770" stroke="#868686" stroke-dasharray="3 3" shape-rendering="crispEdges"/>
<line x1="713.5" y1="679" x2="713.5" y2="770" stroke="#868686" stroke-dasharray="3 3" shape-rendering="crispEdges"/>
<line x1="752.5" y1="679" x2="752.5" y2="770" stroke="#868686" stroke-dasharray="3 3" shape-rendering="crispEdges"/>
<line x1="791.5" y1="679" x2="791.5" y2="770" stroke="#868686" stroke-dasharray="3 3" shape-rendering="crispEdges"/>
<line x1="829.5" y1="679" x2="829.5" y2="770" stroke="#868686" stroke-dasharray="3 3" shape-rendering="crispEdges"/>
<line x1="868.5" y1="679" x2="868.5" y2="770" stroke="#868686" stroke-dasharray="3 3" shape-rendering="crispEdges"/>
<rect x="70.5" y="675.5" width="823" height="95" fill="none" stroke="#909090" shape-rendering="crispEdges"/>
<text x="80.5" y="688" fill="#c4c4c4" letter-spacing="0.25" stroke="#c4c4c4" stroke-width="0.22">Full Estocastico</text>
<line x1="70" y1="713.5" x2="895" y2="713.5" stroke="#f20000" stroke-dasharray="3 3" shape-rendering="crispEdges"/>
<line x1="70" y1="732.5" x2="895" y2="732.5" stroke="#0a6c0a" stroke-dasharray="3 3" shape-rendering="crispEdges"/>
<polyline points="70.75,751.25 95.00,749.25 110.00,748.00 122.50,745.75 135.00,741.25 147.50,737.00 161.25,733.25" fill="none" stroke="#ee1010" stroke-width="2" stroke-linejoin="round" stroke-linecap="round"/>
<polyline points="161.25,733.25 173.75,731.00 185.00,722.50" fill="none" stroke="#2a1a8c" stroke-width="2" stroke-linejoin="round" stroke-linecap="round"/>
<polyline points="185.00,722.50 198.75,710.75 212.50,701.75 225.00,695.75 238.75,694.75 251.25,694.75 263.75,702.50 277.50,712.50" fill="none" stroke="#2a990a" stroke-width="2" stroke-linejoin="round" stroke-linecap="round"/>
<polyline points="277.50,712.50 288.75,719.50 302.50,723.75 315.00,726.75 327.50,730.75" fill="none" stroke="#2a1a8c" stroke-width="2" stroke-linejoin="round" stroke-linecap="round"/>
<polyline points="327.50,730.75 340.00,735.50 352.50,739.25 366.25,742.50 380.00,745.75 392.50,745.75 405.00,743.50 417.50,744.00 430.00,744.00 442.50,742.75 456.25,738.75 468.75,734.25" fill="none" stroke="#ee1010" stroke-width="2" stroke-linejoin="round" stroke-linecap="round"/>
<polyline points="468.75,734.25 482.50,732.75" fill="none" stroke="#2a1a8c" stroke-width="2" stroke-linejoin="round" stroke-linecap="round"/>
<polyline points="482.50,732.75 495.00,734.25 507.50,737.00 520.00,739.00 546.25,739.00 558.75,737.75 572.50,736.75 585.00,734.50 597.50,732.75" fill="none" stroke="#ee1010" stroke-width="2" stroke-linejoin="round" stroke-linecap="round"/>
<polyline points="597.50,732.75 611.25,731.50 623.75,723.25 636.25,714.50" fill="none" stroke="#2a1a8c" stroke-width="2" stroke-linejoin="round" stroke-linecap="round"/>
<polyline points="636.25,714.50 650.00,702.50 662.50,700.75 675.00,702.75 688.75,705.00 700.85,704.70 713.25,705.60" fill="none" stroke="#2a990a" stroke-width="2" stroke-linejoin="round" stroke-linecap="round"/>
<polyline points="713.25,705.60 727.20,714.00 739.60,719.60 752.00,724.50 766.00,725.80 780.00,731.00" fill="none" stroke="#2a1a8c" stroke-width="2" stroke-linejoin="round" stroke-linecap="round"/>
<polyline points="780.00,731.00 792.30,733.20 804.70,739.75 817.00,746.00 829.50,753.70 842.00,761.40 855.80,766.70 868.25,765.50 882.20,760.00" fill="none" stroke="#ee1010" stroke-width="2" stroke-linejoin="round" stroke-linecap="round"/>
<polyline points="70.75,750.00 95.00,750.50 110.00,750.00 125.00,748.00 147.50,744.50 175.00,738.75 190.00,732.50 212.50,721.25 225.00,715.00 237.50,707.50 242.50,706.25 255.00,701.25 265.00,700.00 277.50,700.75 290.00,703.75 302.50,708.00 315.00,713.75 327.50,718.75 340.00,723.75 355.00,729.25 367.50,732.50 380.00,736.25 392.50,739.50 405.00,742.00 417.50,743.75 430.00,744.25 442.50,743.75 455.00,742.50 467.50,741.25 485.00,738.25 497.50,737.00 510.00,736.25 532.50,736.25 547.50,737.50 560.00,738.00 572.50,737.50 585.00,737.00 597.50,736.25 611.25,735.50 623.75,732.50 636.25,728.75 650.00,723.25 662.50,718.25 675.00,713.00 688.75,708.00 702.40,704.00 713.25,703.50 727.20,705.60 739.60,708.75 752.00,712.80 766.00,716.50 780.00,720.50 792.30,725.20 804.70,730.40 817.00,736.00 829.50,741.30 842.00,746.90 855.80,752.00 868.25,756.80 882.20,760.00" fill="none" stroke="#c8c8c8" stroke-width="2" stroke-dasharray="6 3"/>
<text x="66.6" y="688" text-anchor="end" stroke="#000" stroke-width="0.22">100</text><text x="66.6" y="713" text-anchor="end" stroke="#000" stroke-width="0.22">60</text><text x="66.6" y="731.8" text-anchor="end" stroke="#000" stroke-width="0.22">40</text><text x="66.6" y="770.5" text-anchor="end" stroke="#000" stroke-width="0.22">0</text>
<text x="897.5" y="684" stroke="#000" stroke-width="0.22">EST. %</text><text x="897.5" y="695" stroke="#000" stroke-width="0.22">FULL</text><text x="897.5" y="706" stroke="#000" stroke-width="0.22">(28,3,6)</text><text x="900" y="758.5" fill="#1a1aff" letter-spacing="-0.3" stroke="#1a1aff" stroke-width="0.22">11,78</text>
<text x="20.5" y="790" font-size="12" letter-spacing="0.34" stroke="#000" stroke-width="0.4">NICO.CORREA (NEA.MC)</text>
<text x="306.5" y="789.5" font-size="13" fill="#1a1aff" stroke="#1a1aff" stroke-width="0.35" letter-spacing="0.225">/Users/mserra/Library/CloudStorage/Dropbox/WorkDB/DatosBolsa/Configs/Config.DEFAULT.xml</text>
<rect x="919.5" y="776.5" width="66" height="18" fill="#fff" stroke="#8e8e8e" shape-rendering="crispEdges"/><rect x="920" y="777" width="64" height="16" fill="#ee0a0a" shape-rendering="crispEdges"/><text x="923.4" y="789.8" fill="#fff" font-size="12" letter-spacing="-0.6" stroke="#fff" stroke-width="0.22">OFF</text>
<defs>
<linearGradient id="bg" x1="0" y1="0" x2="0" y2="1"><stop offset="0" stop-color="#f4f4f4"/><stop offset="1" stop-color="#e2e2e2"/></linearGradient>
<linearGradient id="sb" x1="0" y1="0" x2="0" y2="1"><stop offset="0" stop-color="#e9e9e9"/><stop offset="0.75" stop-color="#dedede"/><stop offset="1" stop-color="#b2b2b2"/></linearGradient>
<linearGradient id="tv" x1="0" y1="0" x2="0" y2="1"><stop offset="0" stop-color="#fff" stop-opacity="0.28"/><stop offset="0.55" stop-color="#fff" stop-opacity="0"/><stop offset="1" stop-color="#000" stop-opacity="0.25"/></linearGradient>
<radialGradient id="hg" cx="0.45" cy="0.35" r="0.7"><stop offset="0" stop-color="#3c3cc8"/><stop offset="1" stop-color="#141480"/></radialGradient>
<radialGradient id="rd" cx="0.5" cy="0.5" r="0.5"><stop offset="0" stop-color="#ffd8d8"/><stop offset="0.45" stop-color="#ff4a58"/><stop offset="1" stop-color="#f00818"/></radialGradient>
<linearGradient id="tr" x1="0" y1="0" x2="1" y2="0"><stop offset="0" stop-color="#505050"/><stop offset="0.45" stop-color="#6a6a6a"/><stop offset="1" stop-color="#1c1c1c"/></linearGradient>
<linearGradient id="pg" x1="0" y1="0" x2="0" y2="1"><stop offset="0" stop-color="#f4f8ff"/><stop offset="1" stop-color="#9cbcf6"/></linearGradient>
<linearGradient id="rx" x1="0" y1="0" x2="0" y2="1"><stop offset="0" stop-color="#e03030"/><stop offset="1" stop-color="#9a0000"/></linearGradient>
<linearGradient id="fl" x1="0" y1="0" x2="1" y2="1"><stop offset="0" stop-color="#8cc4f4"/><stop offset="1" stop-color="#e4f2ff"/></linearGradient>
<linearGradient id="sv" x1="0" y1="0" x2="0" y2="1"><stop offset="0" stop-color="#f4f4f4"/><stop offset="0.5" stop-color="#b0b0b0"/><stop offset="1" stop-color="#e8e8e8"/></linearGradient>
<radialGradient id="gs" cx="0.6" cy="0.3" r="0.8"><stop offset="0" stop-color="#8ccc50"/><stop offset="1" stop-color="#2e6e14"/></radialGradient>
<radialGradient id="fg" cx="0.5" cy="0.5" r="0.5"><stop offset="0" stop-color="#ffffff" stop-opacity="0.9"/><stop offset="0.65" stop-color="#fdfde8" stop-opacity="0.7"/><stop offset="0.88" stop-color="#e4e49c" stop-opacity="0.75"/><stop offset="1" stop-color="#f0f0c0" stop-opacity="0"/></radialGradient>
<radialGradient id="gr" cx="0.5" cy="0.5" r="0.5"><stop offset="0.3" stop-color="#c8c8c8"/><stop offset="1" stop-color="#8c8c8c"/></radialGradient>
<linearGradient id="cm" x1="0" y1="0" x2="0" y2="1"><stop offset="0" stop-color="#e8e8e8"/><stop offset="1" stop-color="#9a9a9a"/></linearGradient>
</defs>
<rect x="19" y="11.6" width="135" height="19.8" rx="5.5" fill="#fff" stroke="url(#sb)" stroke-width="1"/>
<text x="27.5" y="24.8" font-size="13" stroke="#000" stroke-width="0.3" letter-spacing="0.16">CandleSticks</text>
<rect x="195" y="11.6" width="98" height="19.8" rx="5.5" fill="#fff" stroke="url(#sb)" stroke-width="1"/>
<text x="203.5" y="24.8" font-size="13" stroke="#000" stroke-width="0.3" letter-spacing="0.1">3 mesos</text>
<rect x="304" y="11.6" width="91" height="19.8" rx="5.5" fill="#fff" stroke="url(#sb)" stroke-width="1"/>
<text x="312.5" y="24.8" font-size="13" stroke="#000" stroke-width="0.3" letter-spacing="0">dia</text>
<rect x="435.5" y="15.5" width="13" height="13" rx="3.2" fill="#fff" stroke="#b6b6b6" stroke-width="1"/>
<rect x="505.5" y="15.5" width="13" height="13" rx="3.2" fill="#fff" stroke="#b6b6b6" stroke-width="1"/>
<text x="455.7" y="26.6" font-size="13" stroke="#000" stroke-width="0.3" letter-spacing="-0.2">Guies</text>
<text x="525.8" y="26.6" font-size="13" stroke="#000" stroke-width="0.3" letter-spacing="0">Cursor</text>
<path d="M140.60000000000002 19.9 L143.8 17 L147.0 19.9 M140.60000000000002 23.8 L143.8 26.7 L147.0 23.8" fill="none" stroke="#1c1c1c" stroke-width="1.5" stroke-linecap="round" stroke-linejoin="round"/>
<path d="M279.8 19.9 L283 17 L286.2 19.9 M279.8 23.8 L283 26.7 L286.2 23.8" fill="none" stroke="#1c1c1c" stroke-width="1.5" stroke-linecap="round" stroke-linejoin="round"/>
<path d="M381.8 19.9 L385 17 L388.2 19.9 M381.8 23.8 L385 26.7 L388.2 23.8" fill="none" stroke="#1c1c1c" stroke-width="1.5" stroke-linecap="round" stroke-linejoin="round"/>
<circle cx="174.2" cy="21.2" r="11.3" fill="url(#hg)" stroke="#9090f6" stroke-width="1.6"/>
<text x="174.4" y="29.2" text-anchor="middle" font-size="22.5" font-weight="bold" fill="#e0e0ff" stroke="#e0e0ff" stroke-width="0.22">?</text>
<g shape-rendering="crispEdges"><rect x="405" y="13" width="19" height="1" fill="#b0b0b0"/><rect x="405" y="14" width="19" height="4" fill="#000"/><rect x="405.5" y="19.5" width="18" height="9" fill="#fff" stroke="#000"/><rect x="404" y="30" width="20" height="1" fill="#a8a8a8"/></g>
<path d="M410 16.4 l1.5 -0.8 l1.5 1 l1.5 0 l1.5 -0.6 l1.5 0.6 l1.5 -1.2" fill="none" stroke="#20d020" stroke-width="1.2"/>
<path d="M408.2 22.8 L409.8 25.2 L414.6 21.2 L416 22.4" fill="none" stroke="#1a1aff" stroke-width="1.1"/>
<path d="M438 22.3 L441.3 26 L446.2 18.3" fill="none" stroke="#1c1c1c" stroke-width="1.9" stroke-linecap="round" stroke-linejoin="round"/>
<path d="M587 11.5 C587 6.8 607.5 6.8 607.5 11.5 C607.5 18 605 26 603.6 31 C603 34.6 591.4 34.6 590.8 31 C589.5 26 587 18 587 11.5 Z" fill="url(#tr)"/>
<path d="M587 11.5 C587 6.8 607.5 6.8 607.5 11.5 C607.5 18 605 26 603.6 31 C603 34.6 591.4 34.6 590.8 31 C589.5 26 587 18 587 11.5 Z" fill="url(#tv)"/>
<ellipse cx="597.2" cy="11.3" rx="9.8" ry="3.4" fill="#8c8c8c" stroke="#5a5a5a" stroke-width="0.8"/>
<ellipse cx="597.2" cy="11.8" rx="8.4" ry="2.4" fill="#6e6e6e"/>
<rect x="623.5" y="7.5" width="19" height="26" fill="url(#pg)" stroke="#78a0f0" stroke-width="1"/>
<path d="M627.5 8.5 C630 13 638 23 646 27.5 C645.5 31 642 33.5 639.5 33 C634 29 627 18 622.5 13.5 C623.5 11 625.5 9.5 627.5 8.5 Z" fill="url(#rx)"/>
<path d="M642.5 10.5 C637 14 628 24 620.5 28 C621 31.5 624 33.8 626.5 33.6 C631 29 639 20 646.5 15.5 C646 13 644.5 11.5 642.5 10.5 Z" fill="url(#rx)"/>
<rect x="656.3" y="16.6" width="23" height="15.9" rx="1.8" fill="url(#cm)" stroke="#707070" stroke-width="0.8"/>
<path d="M663 16.7 H679" stroke="#4a4a4a" stroke-width="1"/>
<rect x="656.8" y="17.2" width="6.4" height="14.8" rx="1.4" fill="#828282"/><rect x="658.3" y="14.2" width="4.4" height="3" rx="1" fill="#6e6e6e"/>
<circle cx="671.6" cy="26.6" r="5" fill="#ececec" stroke="#8a8a8a" stroke-width="0.8"/><circle cx="671.6" cy="26.6" r="3.3" fill="#a4a494"/><circle cx="671.6" cy="26.8" r="1.9" fill="#5a5a4a"/>
<rect x="669.3" y="15.8" width="6.6" height="3.2" rx="1" fill="#fff" stroke="#9a9a9a" stroke-width="0.6"/>
<circle cx="673" cy="15.6" r="9.6" fill="url(#fg)"/>
<g shape-rendering="crispEdges"><rect x="694" y="11" width="21" height="21" fill="#3232b4"/><rect x="698" y="12" width="13" height="10" fill="url(#fl)"/><rect x="698" y="25" width="13" height="7" fill="#c4c4c4"/><rect x="699" y="26" width="3" height="6" fill="#3232b4"/><rect x="712" y="12" width="2" height="2" fill="#fff"/></g>
<path d="M729.5 28.5 L728.5 15.5 Q728.5 13.5 730.5 13.5 L736.5 13.5 L738 15.8 L746 15.8 L746 19.5" fill="#fbeed8" stroke="#c8925c" stroke-width="1"/>
<path d="M729.5 28.8 L734.5 19.8 L749.8 19.8 L744.5 28.8 Z" fill="#fdf3e0" stroke="#c8925c" stroke-width="1" stroke-linejoin="round"/>
<path d="M763.81 19.64 L764.03 17.89 L764.57 16.20 L765.41 14.62 L766.53 13.20 L767.89 11.97 L769.45 10.97 L771.17 10.23 L773.00 9.77 L774.89 9.60 L776.78 9.73 L778.62 10.16 L780.36 10.87 L781.94 11.84 L783.32 13.04 L785.26 11.30 L783.81 18.90 L777.97 18.13 L779.90 16.39 L779.09 15.76 L778.16 15.26 L777.13 14.89 L776.05 14.67 L774.93 14.60 L773.82 14.69 L772.74 14.93 L771.73 15.31 L770.81 15.83 L770.01 16.47 L769.35 17.21 L768.86 18.03 L768.54 18.90 L768.40 19.81Z" fill="#66c044" stroke="#4ea830" stroke-width="0.7" stroke-linejoin="round"/>
<path d="M786.19 20.36 L785.97 22.11 L785.43 23.80 L784.59 25.38 L783.47 26.80 L782.11 28.03 L780.55 29.03 L778.83 29.77 L777.00 30.23 L775.11 30.40 L773.22 30.27 L771.38 29.84 L769.64 29.13 L768.06 28.16 L766.68 26.96 L764.74 28.70 L766.19 21.10 L772.03 21.87 L770.10 23.61 L770.91 24.24 L771.84 24.74 L772.87 25.11 L773.95 25.33 L775.07 25.40 L776.18 25.31 L777.26 25.07 L778.27 24.69 L779.19 24.17 L779.99 23.53 L780.65 22.79 L781.14 21.97 L781.46 21.10 L781.60 20.19Z" fill="#66c044" stroke="#4ea830" stroke-width="0.7" stroke-linejoin="round"/>
<ellipse cx="809" cy="31.3" rx="12" ry="1.6" fill="#1a1a1a"/>
<circle cx="811" cy="20" r="10.6" fill="url(#gs)"/>
<text x="810.5" y="31.6" text-anchor="middle" font-size="31" font-weight="bold" fill="#efeeea" stroke="#b4b4aa" stroke-width="0.6" transform="rotate(10 810 20)">S</text>
<text text-anchor="middle" font-size="33" font-weight="bold" fill="#454545" stroke="#454545" stroke-width="1.2" transform="translate(846.3 33.2) rotate(-16 0 -12) scale(1.22 1)">€</text>
<text text-anchor="middle" font-size="33" font-weight="bold" fill="#e6e6e6" stroke="#a0a0a0" stroke-width="0.8" transform="translate(844.5 31.8) rotate(-16 0 -12) scale(1.22 1)">€</text>
<path d="M892.59 17.63 L892.59 22.37 L888.92 22.38 L887.70 25.33 L890.29 27.94 L886.94 31.29 L884.33 28.70 L881.38 29.92 L881.37 33.59 L876.63 33.59 L876.62 29.92 L873.67 28.70 L871.06 31.29 L867.71 27.94 L870.30 25.33 L869.08 22.38 L865.41 22.37 L865.41 17.63 L869.08 17.62 L870.30 14.67 L867.71 12.06 L871.06 8.71 L873.67 11.30 L876.62 10.08 L876.63 6.41 L881.37 6.41 L881.38 10.08 L884.33 11.30 L886.94 8.71 L890.29 12.06 L887.70 14.67 L888.92 17.62Z" fill="url(#gr)" stroke="#5a5a5a" stroke-width="1" stroke-linejoin="round" transform="rotate(22.5 879 20)"/>
<circle cx="879" cy="20" r="6.2" fill="none" stroke="#b8b8b8" stroke-width="2.4"/><circle cx="879" cy="20" r="2.6" fill="#fff" stroke="#666" stroke-width="1.3"/>
<path d="M902.3 13.5 L921.2 9.5 L925.7 28.4 L904.5 32 Z" fill="#fff" stroke="#3a3a3a" stroke-width="1" stroke-linejoin="round"/>
<path d="M902.3 13.5 L921.2 9.5 L922 13 L902.8 17.2 Z" fill="#6cc010"/>
<text x="914.3" y="27.3" text-anchor="middle" font-size="11.5" fill="#111" transform="rotate(-10 914 22)" letter-spacing="-0.4" stroke="#111" stroke-width="0.22">17</text>
<circle cx="969" cy="21.7" r="6.5" fill="#fff" stroke="#c2c2c2" stroke-width="1"/>
<circle cx="969" cy="473" r="6.5" fill="#fff" stroke="#c2c2c2" stroke-width="1"/>
<circle cx="968.5" cy="579.8" r="6.5" fill="#fff" stroke="#c2c2c2" stroke-width="1"/>
<circle cx="968.5" cy="579.8" r="2.7" fill="#1a1a1a"/>
<circle cx="968.8" cy="683" r="6.5" fill="#fff" stroke="#c2c2c2" stroke-width="1"/>
<rect x="953.5" y="36.5" width="32" height="21" fill="url(#bg)" stroke="#a6a6a6" shape-rendering="crispEdges"/>
<circle cx="966.2" cy="44.8" r="3.7" fill="#c4c4c4" stroke="#333" stroke-width="1.3"/><path d="M969.2 47.8 L975.3 53.3" stroke="#2a2a2a" stroke-width="1.7" stroke-linecap="round"/>
<rect x="953.5" y="61.5" width="31" height="21" fill="#fbf4f6" stroke="none"/>
<path d="M953.5 61.5 v21 M984.5 61.5 v21 M956.5 61.5 v21 M971.5 61.5 v21" stroke="#b4b4c4" stroke-width="1" shape-rendering="crispEdges"/>
<path d="M955 82.5 L955 63 L956 66 L958 70 L959.5 67.5 L961 72 L962.5 79 L965 76 L967.5 66 L969.5 72 L971 79 L972.5 82.5 Z M977 82.5 L978.5 77 L980.5 72.5 L982.5 77 L983.5 82.5 Z" fill="#4a50b4"/>
<path d="M955 66 L957 69.5 L960 69.5 L968 69 L969 67.5 L970.5 69.5 L974 68.5 L976.5 72.5 L978.5 68.5 L980 69.5 L982.5 69.5" fill="none" stroke="#e01818" stroke-width="1.1"/>
<rect x="953.5" y="85.5" width="32" height="21" fill="url(#bg)" stroke="#a6a6a6" shape-rendering="crispEdges"/>
<rect x="957" y="94.5" width="24" height="2" fill="#e62e2e"/>
<rect x="953.5" y="110.5" width="32" height="21" fill="url(#bg)" stroke="#a6a6a6" shape-rendering="crispEdges"/>
<rect x="957" y="119.5" width="24" height="2" fill="#2828f4"/>
<rect x="953.5" y="135.5" width="32" height="21" fill="url(#bg)" stroke="#a6a6a6" shape-rendering="crispEdges"/>
<path d="M957 151.5 L973 135.2 M965 157 L980.5 141" stroke="#3a3a3a" stroke-width="0.9" fill="none"/>
<path d="M965 156.2 L962.8 147.2 L969 150.2 L970.5 143.2 L975.2 146.2 L973.5 136.8 L979.5 140.2" stroke="#3a3af0" stroke-width="1" fill="none"/>
<rect x="953.5" y="160.5" width="32" height="21" fill="url(#bg)" stroke="#a6a6a6" shape-rendering="crispEdges"/>
<path d="M958.5 181.60000000000002 L980 160.3" stroke="#1a1a1a" stroke-width="1.4" fill="none"/>
<path d="M961 173.60000000000002 L966.5 174.10000000000002 L966.5 179.10000000000002" stroke="#1a1aff" stroke-width="1.2" fill="none"/>
<path d="M973.5 161.10000000000002 L972.5 167.60000000000002 L979 166.10000000000002" stroke="#1a1aff" stroke-width="1.2" fill="none"/>
<rect x="953.5" y="185.5" width="32" height="21" fill="url(#bg)" stroke="#a6a6a6" shape-rendering="crispEdges"/>
<path d="M958.5 206.60000000000002 L980 185.3" stroke="#1a1a1a" stroke-width="1.4" fill="none"/>
<path d="M961 198.60000000000002 L966.5 199.10000000000002 L966.5 204.10000000000002" stroke="#1a1aff" stroke-width="1.2" fill="none"/>
<path d="M973.5 186.10000000000002 L972.5 192.60000000000002 L979 191.10000000000002" stroke="#1a1aff" stroke-width="1.2" fill="none"/>
<text x="958.6" y="197" font-size="11" font-weight="bold" fill="#ee1020" stroke="#ee1020" stroke-width="0.22">Σ</text>
<rect x="953.5" y="210.5" width="32" height="21" fill="url(#bg)" stroke="#a6a6a6" shape-rendering="crispEdges"/>
<path d="M967.5 215 h4 v3.2 h2.8 L969.5 225.6 L964.7 218.2 h2.8 Z" fill="#f01808"/>
<rect x="953.5" y="235.5" width="32" height="21" fill="url(#bg)" stroke="#a6a6a6" shape-rendering="crispEdges"/>
<path d="M969.5 240 L974.3 248 h-2.8 v2.6 h-4 v-2.6 h-2.8 Z" fill="#0a0af8"/>
<rect x="953.5" y="260.5" width="32" height="21" fill="url(#bg)" stroke="#a6a6a6" shape-rendering="crispEdges"/>
<path d="M960.5 266.8 h2 v3.2 h3.2 v2 h-3.2 v3.2 h-2 v-3.2 h-3.2 v-2 h3.2 Z" fill="#a4d870" stroke="#6cb030" stroke-width="0.9"/>
<path d="M970 266.5 h4.5 v3 h3.5 L972.3 276.2 L966.7 269.5 h3.3 Z" fill="#ea2010"/>
<path d="M981 272 L984 275 L981 278 L978 275 Z" fill="#fff" stroke="#ee2020" stroke-width="0.9"/>
<rect x="953.5" y="285.5" width="32" height="21" fill="#ebebeb" stroke="none"/>
<path d="M955.5 285.5 h-2 v21 h2 M983.5 285.5 h2 v21 h-2" fill="none" stroke="#a6a6a6" shape-rendering="crispEdges"/>
<rect x="957" y="291" width="7" height="2" fill="#3a3a3a"/>
<rect x="966" y="291" width="7" height="2" fill="#3a3a3a"/>
<rect x="975" y="291" width="6" height="2" fill="#3a3a3a"/>
<rect x="957" y="296" width="7" height="2" fill="#3a3a3a"/>
<rect x="966" y="296" width="7" height="2" fill="#3a3a3a"/>
<rect x="975" y="296" width="6" height="2" fill="#3a3a3a"/>
<rect x="957" y="301" width="7" height="2" fill="#3a3a3a"/>
<rect x="966" y="301" width="7" height="2" fill="#3a3a3a"/>
<rect x="975" y="301" width="6" height="2" fill="#3a3a3a"/>
<rect x="953.5" y="311.5" width="32" height="21" fill="#ebebeb" stroke="none"/>
<path d="M955.5 311.5 h-2 v21 h2 M983.5 311.5 h2 v21 h-2" fill="none" stroke="#a6a6a6" shape-rendering="crispEdges"/>
<path d="M956 313.3 h16 M956 330.7 h16 M964.2 313.5 v17" stroke="#1414ff" stroke-width="1.05" fill="none"/>
<path d="M964 313.6 L966.8 317 h-5.6 Z M964 330.3 L966.8 327 h-5.6 Z" fill="#1414ff"/>
<text transform="translate(973 330) scale(0.52 1)" font-size="19" fill="#1a1a1a" stroke="none">%</text>
<rect x="953.5" y="335.5" width="32" height="21" fill="url(#bg)" stroke="#a6a6a6" shape-rendering="crispEdges"/>
<path d="M958.5 340.5 h12.5" stroke="#2a6aff" stroke-width="1.2"/><path d="M958.5 346.2 h12.5" stroke="#1a1a1a" stroke-width="1.3"/><path d="M958.5 351.8 h12.5" stroke="#ee3a2a" stroke-width="1.5"/>
<text transform="translate(972 353.7) scale(0.56 1)" font-size="18.5" fill="#1a1a1a" stroke="none">%</text>
<rect x="953.5" y="361.5" width="32" height="21" fill="url(#bg)" stroke="#a6a6a6" shape-rendering="crispEdges"/>
<rect x="960" y="362.5" width="19" height="19" fill="#dcdce4"/>
<circle cx="969.5" cy="372" r="7" fill="#d0d0d4" stroke="#c42424" stroke-width="2.6"/><path d="M964.3 367 L974.7 377" stroke="#c42424" stroke-width="2.6"/>
<rect x="953.5" y="385.5" width="32" height="21" fill="url(#bg)" stroke="#a6a6a6" shape-rendering="crispEdges"/>
<circle cx="969" cy="396" r="5.9" fill="url(#rd)"/>
<rect x="953.5" y="408.5" width="32" height="21" fill="url(#bg)" stroke="#a6a6a6" shape-rendering="crispEdges"/>
<path d="M964 417 C966 413.5 971 412.5 973.5 414.5 L974.5 412.5 L976.5 417.5 L970.5 418 L972 416 C970 415 967 415.5 964 417 Z" fill="#2264d8"/>
<path d="M975 421.5 C973 425 968 426 965.5 424 L964.5 426 L962.5 421 L968.5 420.5 L967 422.5 C969 423.5 972 423 975 421.5 Z" fill="#2264d8"/>
<rect x="953.5" y="487.5" width="32" height="21" fill="#fdfdfd" stroke="#a6a6a6" shape-rendering="crispEdges"/>
<path d="M961.8 493.4 h3.8 v3 h3.9 L963.6 503.1 L957.9 496.4 h3.9 Z" fill="#e42414"/>
<path d="M976.8 493.4 L982.5 499.1 h-3.8 v4 h-3.8 v-4 h-3.9 Z" fill="#6cba2c"/>
<rect x="953.5" y="596.5" width="32" height="21" fill="#fdfdfd" stroke="#a6a6a6" shape-rendering="crispEdges"/>
<path d="M961.8 602.4 h3.8 v3 h3.9 L963.6 612.1 L957.9 605.4 h3.9 Z" fill="#e42414"/>
<path d="M976.8 602.4 L982.5 608.1 h-3.8 v4 h-3.8 v-4 h-3.9 Z" fill="#6cba2c"/>
<rect x="953.5" y="697.5" width="32" height="21" fill="#fdfdfd" stroke="#a6a6a6" shape-rendering="crispEdges"/>
<path d="M961.8 703.4 h3.8 v3 h3.9 L963.6 713.1 L957.9 706.4 h3.9 Z" fill="#e42414"/>
<path d="M976.8 703.4 L982.5 709.1 h-3.8 v4 h-3.8 v-4 h-3.9 Z" fill="#6cba2c"/>
<rect x="953.5" y="513.5" width="32" height="21" fill="url(#bg)" stroke="#a6a6a6" shape-rendering="crispEdges"/>
<path d="M958.5 518.5 h12.5" stroke="#2a6aff" stroke-width="1.2"/><path d="M958.5 524.2 h12.5" stroke="#1a1a1a" stroke-width="1.3"/><path d="M958.5 529.8 h12.5" stroke="#ee3a2a" stroke-width="1.5"/>
<text transform="translate(972 531.7) scale(0.56 1)" font-size="18.5" fill="#1a1a1a" stroke="none">%</text>
<rect x="953.5" y="620.5" width="32" height="21" fill="url(#bg)" stroke="#a6a6a6" shape-rendering="crispEdges"/>
<path d="M958.5 625.5 h12.5" stroke="#2a6aff" stroke-width="1.2"/><path d="M958.5 631.2 h12.5" stroke="#1a1a1a" stroke-width="1.3"/><path d="M958.5 636.8 h12.5" stroke="#ee3a2a" stroke-width="1.5"/>
<text transform="translate(972 638.7) scale(0.56 1)" font-size="18.5" fill="#1a1a1a" stroke="none">%</text>
<rect x="953.5" y="722.5" width="32" height="21" fill="url(#bg)" stroke="#a6a6a6" shape-rendering="crispEdges"/>
<path d="M958.5 727.5 h12.5" stroke="#2a6aff" stroke-width="1.2"/><path d="M958.5 733.2 h12.5" stroke="#1a1a1a" stroke-width="1.3"/><path d="M958.5 738.8 h12.5" stroke="#ee3a2a" stroke-width="1.5"/>
<text transform="translate(972 740.7) scale(0.56 1)" font-size="18.5" fill="#1a1a1a" stroke="none">%</text>
<defs><clipPath id="cc541"><rect x="954" y="542.0" width="31" height="20"/></clipPath><clipPath id="cc644"><rect x="954" y="645.0" width="31" height="20"/></clipPath><clipPath id="cc747"><rect x="954" y="748.0" width="31" height="20"/></clipPath></defs>
<rect x="953.5" y="541.5" width="32" height="21" fill="url(#bg)" stroke="#a6a6a6" shape-rendering="crispEdges"/>
<g clip-path="url(#cc541)">
<path d="M958 555.5 h27" stroke="#2a9a1a" stroke-width="0.9" stroke-dasharray="3 1.5 1 1.5"/>
<path d="M977.6 558.5 v2.5" stroke="#5a5ad0" stroke-width="0.8"/>
<path d="M955.3 544.9 C960 546.5 964 555.5 967.7 560.5 C972 556.5 975 547.5 977.5 541.0" stroke="#1414ff" stroke-width="1.7" fill="none"/>
<path d="M955.3 545.5 C962 547.5 966 553.5 970.3 557.5 C974 555.5 978 548.5 981 541.0" stroke="#e81c1c" stroke-width="2" fill="none"/>
</g>
<rect x="953.5" y="644.5" width="32" height="21" fill="url(#bg)" stroke="#a6a6a6" shape-rendering="crispEdges"/>
<g clip-path="url(#cc644)">
<path d="M958 658.5 h27" stroke="#2a9a1a" stroke-width="0.9" stroke-dasharray="3 1.5 1 1.5"/>
<path d="M977.6 661.5 v2.5" stroke="#5a5ad0" stroke-width="0.8"/>
<path d="M955.3 647.9 C960 649.5 964 658.5 967.7 663.5 C972 659.5 975 650.5 977.5 644.0" stroke="#1414ff" stroke-width="1.7" fill="none"/>
<path d="M955.3 648.5 C962 650.5 966 656.5 970.3 660.5 C974 658.5 978 651.5 981 644.0" stroke="#e81c1c" stroke-width="2" fill="none"/>
</g>
<rect x="953.5" y="747.5" width="32" height="21" fill="url(#bg)" stroke="#a6a6a6" shape-rendering="crispEdges"/>
<g clip-path="url(#cc747)">
<path d="M958 761.5 h27" stroke="#2a9a1a" stroke-width="0.9" stroke-dasharray="3 1.5 1 1.5"/>
<path d="M977.6 764.5 v2.5" stroke="#5a5ad0" stroke-width="0.8"/>
<path d="M955.3 750.9 C960 752.5 964 761.5 967.7 766.5 C972 762.5 975 753.5 977.5 747.0" stroke="#1414ff" stroke-width="1.7" fill="none"/>
<path d="M955.3 751.5 C962 753.5 966 759.5 970.3 763.5 C974 761.5 978 754.5 981 747.0" stroke="#e81c1c" stroke-width="2" fill="none"/>
</g>
</svg>
</body></html>
